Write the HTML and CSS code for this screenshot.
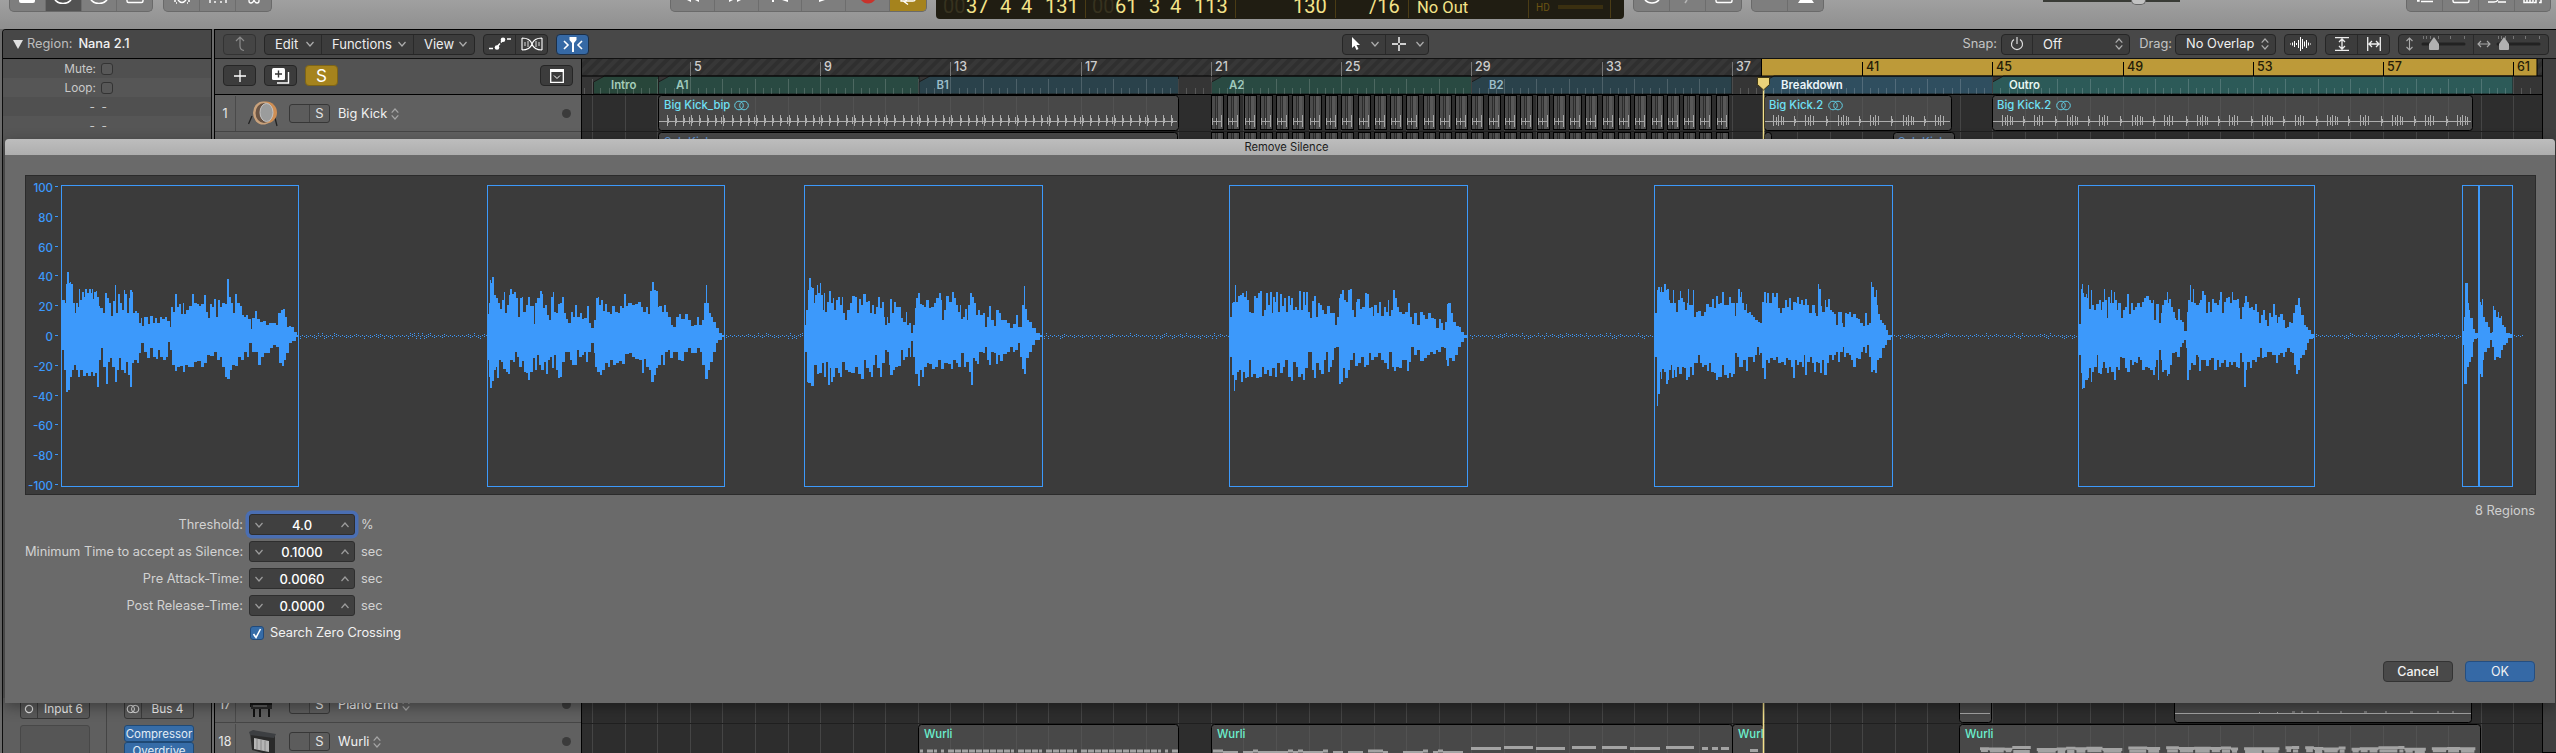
FILE: index.html
```html
<!DOCTYPE html>
<html lang="en">
<head>
<meta charset="utf-8">
<title>Remove Silence</title>
<link rel="stylesheet" href="styles.css">
</head>
<body>
<svg class="defs" aria-hidden="true">
  <symbol id="down" viewBox="0 0 10 10"><path d="M1.5 3l3.5 4 3.5-4" fill="none" stroke="currentColor" stroke-width="1.2"/></symbol>
  <symbol id="up" viewBox="0 0 10 10"><path d="M1.5 7l3.5-4 3.5 4" fill="none" stroke="currentColor" stroke-width="1.2"/></symbol>
  <symbol id="updown" viewBox="0 0 8 12"><path d="M.7 4.700L4 1l3.300 3.700M.7 7.300L4 11l3.300-3.700" fill="none" stroke="currentColor" stroke-width="1.2"/></symbol>
  <symbol id="stereo" viewBox="0 0 16 10"><g fill="none" stroke="currentColor" stroke-width="1.1"><circle cx="5.5" cy="5" r="4.2"/><circle cx="10.5" cy="5" r="4.2"/></g></symbol>
</svg>
<div class="app">
  <header class="topbar">
    <div class="tgroup g1">
      <span><svg width="16" height="4"><path d="M0 0h16v1q0 2-2 2H2q-2 0-2-2z" fill="#fff"/></svg></span>
      <span class="dark"><svg width="18" height="4"><path d="M1 0Q4 3.5 9 3.5T17 0" fill="none" stroke="#fff" stroke-width="1.6"/></svg></span>
      <span><svg width="18" height="4"><path d="M1 0Q4 3.5 9 3.5T17 0" fill="none" stroke="#fff" stroke-width="1.6"/></svg></span>
      <span><svg width="18" height="4"><path d="M1 0v1q0 1.5 1.5 1.5h13Q17 2.500 17 1V0" fill="none" stroke="#fff" stroke-width="1.4"/></svg></span>
    </div>
    <div class="tgroup g2">
      <span><svg width="18" height="4"><path d="M1 1h2M15 1h2M5 0q4 5 8 0M3 3h1M14 3h1" fill="none" stroke="#fff" stroke-width="1.4"/></svg></span>
      <span><svg width="18" height="4"><path d="M1 0v3M6 1v2M12 1v2M17 0v3" stroke="#fff" stroke-width="1.4"/></svg></span>
      <span><svg width="14" height="4"><path d="M2 0v1q0 2 2 2t3-3q1 3 3 3t2-2V0" fill="none" stroke="#fff" stroke-width="1.3"/></svg></span>
    </div>
    <div class="tgroup g3">
      <span><svg width="16" height="3"><path d="M3 0h4v2zM11 0h4v2z" fill="#fff"/></svg></span>
      <span><svg width="16" height="3"><path d="M1 0h4L1 2zM9 0h4L9 2z" fill="#fff"/></svg></span>
      <span><svg width="16" height="3"><path d="M0 0h2v2H0zM10 0h6v2z" fill="#fff"/></svg></span>
      <span><svg width="12" height="3"><path d="M1 0h6L1 2z" fill="#fff"/></svg></span>
      <span><svg width="14" height="4"><path d="M0 0h14q-3 3.500-7 3.500T0 0z" fill="#c8332c"/></svg></span>
      <span class="gold"><svg width="16" height="5"><path d="M1 0v1h12q2 0 2-1M7 0L4 1.500l4 3" fill="none" stroke="#fff" stroke-width="1.300"/></svg></span>
    </div>
    <div class="lcd">
      <div class="c1"><i>00</i><b class="n2">37</b><b class="n1">4</b><b class="n1b">4</b><b class="n3">131</b></div>
      <div class="c2"><i>00</i><b class="n2">61</b><b class="n1">3</b><b class="n1b">4</b><b class="n3">113</b></div>
      <div class="c3">130</div>
      <div class="c4">/16</div>
      <div class="c5">No Out</div>
      <div class="c6"><small>HD</small><em></em></div>
    </div>
    <div class="tgroup g4">
      <span><svg width="16" height="4"><path d="M1 0Q4 3 8 3T15 0" fill="none" stroke="#fff" stroke-width="1.600"/></svg></span>
      <span><svg width="10" height="4"><path d="M4 0L2 3" stroke="#b5b5b5" stroke-width="1.500"/></svg></span>
      <span><svg width="18" height="4"><path d="M1 0v1q0 1.500 1.500 1.500h13Q17 2.500 17 1V0" fill="none" stroke="#fff" stroke-width="1.400"/></svg></span>
    </div>
    <div class="tgroup g5"><span></span><span><svg width="16" height="4"><path d="M2 0h12l2 3H0z" fill="#fff"/></svg></span></div>
    <div class="master"><i></i></div>
    <div class="tgroup g6">
      <span><svg width="16" height="4"><path d="M0 0h2v1H0M4 1.500h12" stroke="#fff" stroke-width="1.400"/></svg></span>
      <span><svg width="18" height="4"><path d="M1 0v1q0 1.500 1.500 1.500h13Q17 2.500 17 1V0" fill="none" stroke="#fff" stroke-width="1.400"/></svg></span>
      <span><svg width="18" height="4"><path d="M0 2h6q3 0 4-2M10 2h8" fill="none" stroke="#fff" stroke-width="1.400"/></svg></span>
      <span><svg width="20" height="5"><path d="M1 0v2.500h9V0M4 0v2M7 0v2M13 0v2.500h-2M18 0v2.500h-2" fill="none" stroke="#fff" stroke-width="1.500"/></svg></span>
    </div>
  </header>

  <div class="main">
    <aside class="inspector">
      <div class="ihead"><svg width="10" height="9"><path d="M0 0h10L5 9z" fill="#e0e0e0"/></svg><span>Region:</span><b>Nana 2.1</b></div>
      <div class="irow"><span>Mute:</span><i></i></div>
      <div class="irow alt"><span>Loop:</span><i></i></div>
      <div class="irow dash"><span>-</span><span>-</span></div>
      <div class="irow alt dash"><span>-</span><span>-</span></div>
      <div class="fill"></div>
      <div class="strips">
        <div class="strip">
          <div class="io"><span><svg width="10" height="10"><circle cx="5" cy="5" r="3.600" fill="none" stroke="#ddd" stroke-width="1.200"/></svg></span><p>Input 6</p></div>
          <div class="slot"></div>
        </div>
        <div class="strip">
          <div class="io"><span><svg width="14" height="10"><use href="#stereo"/></svg></span><p>Bus 4</p></div>
          <div class="fx">Compressor</div><div class="fx">Overdrive</div>
        </div>
      </div>
    </aside>

    <section class="arrange">
      <div class="toolbar">
        <div class="btn up"><svg width="14" height="16"><path d="M3 5l4-4 4 4M7 1v9q0 4 4 4.500" fill="none" stroke="#8b8b8b" stroke-width="1.200"/></svg></div>
        <div class="seg menus"><span class="m1">Edit<svg width="10" height="10"><use href="#down"/></svg></span><span class="m2">Functions<svg width="10" height="10"><use href="#down"/></svg></span><span class="m3">View<svg width="10" height="10"><use href="#down"/></svg></span></div>
        <div class="seg pair">
          <span><svg width="22" height="14"><path d="M0 11.500h4M8 10l6-7M18 2h4" stroke="#fff" stroke-width="1.500" stroke-dasharray="4.500 1.500"/><circle cx="8" cy="10.500" r="2.300" fill="#fff"/><circle cx="14" cy="2.800" r="2.300" fill="#fff"/></svg></span>
          <span><svg width="22" height="14"><path d="M1 1v12M21 1v12M1 1q8 0 10 6t10 6M1 13q8 0 10-6T21 1" fill="none" stroke="#fff" stroke-width="1.100"/><path d="M4 5v4M7 4v6M15 4v6M18 5v4" stroke="#ddd"/></svg></span>
        </div>
        <div class="btn blue"><svg width="20" height="15"><path d="M1 4l4 4-4 4M19 4l-4 4 4 4" fill="none" stroke="#fff" stroke-width="1.600"/><path d="M6.500 0h7v3l-2.500 3v9H9V6L6.500 3z" fill="#fff"/></svg></div>
        <div class="seg tools">
          <span><svg width="9" height="14"><path d="M0 0v11l2.500-2.300L4.500 13l2-1-2-4H8z" fill="#fff"/></svg><svg width="10" height="10"><use href="#down"/></svg></span>
          <span><svg width="14" height="14"><path d="M7 0v6M7 8v6M0 7h6M8 7h6" stroke="#fff" stroke-width="1.400"/></svg><svg width="10" height="10"><use href="#down"/></svg></span>
        </div>
        <label class="snap">Snap:</label>
        <div class="seg snapbox"><span class="pw"><svg width="14" height="14"><path d="M4 2.500a5.500 5.500 0 1 0 6 0M7 0v7" fill="none" stroke="#ddd" stroke-width="1.200"/></svg></span><span class="val">Off<svg width="8" height="12"><use href="#updown"/></svg></span></div>
        <label class="drag">Drag:</label>
        <div class="seg dragbox"><span class="val">No Overlap<svg width="8" height="12"><use href="#updown"/></svg></span></div>
        <div class="btn wv"><svg width="22" height="14"><path d="M.5 6.500v1M2.500 5.500v3M4.500 4v6M6.500 6v2M8.500 3v8M10.500 0v14M12.500 2v10M14.500 4.500v5M16.500 3v8M18.500 5.500v3M20.500 6.500v1" stroke="#fff"/></svg></div>
        <div class="seg pair2">
          <span><svg width="14" height="14"><path d="M0 .7h14M0 13.300h14M7 2v10M4 5l3-3 3 3M4 9l3 3 3-3" fill="none" stroke="#eee" stroke-width="1.300"/></svg></span>
          <span><svg width="14" height="14"><path d="M.7 0v14M13.300 0v14M2 7h10M5 4L2 7l3 3M9 4l3 3-3 3" fill="none" stroke="#eee" stroke-width="1.300"/></svg></span>
        </div>
        <div class="seg zooms">
          <span><svg width="75" height="20"><path d="M10.500 4v12M7.500 7l3-3 3 3M7.500 13l3 3 3-3" fill="none" stroke="#aaa" stroke-width="1.100"/><path d="M24.500 2v3M27.500 2v3M31.500 2v3M39.500 2v3M51.500 2v3M65.500 2v3" stroke="#777"/><path d="M24 10h41" stroke="#222" stroke-width="3" stroke-linecap="round"/><path d="M35 3l5 7v5q0 1-1 1h-8q-1 0-1-1v-5z" fill="#b0b0b0"/></svg></span>
          <span><svg width="75" height="20"><path d="M4 10h12M7 7l-3 3 3 3M13 7l3 3-3 3" fill="none" stroke="#aaa" stroke-width="1.100"/><path d="M24.500 2v3M27.500 2v3M31.500 2v3M39.500 2v3M51.500 2v3M65.500 2v3" stroke="#777"/><path d="M24 10h41" stroke="#222" stroke-width="3" stroke-linecap="round"/><path d="M30 3l5 7v5q0 1-1 1h-8q-1 0-1-1v-5z" fill="#b0b0b0"/></svg></span>
        </div>
      </div>
      <div class="work">
        <div class="tracks">
          <div class="thead">
            <div class="btn"><svg width="12" height="12"><path d="M6 0v12M0 6h12" stroke="#fff" stroke-width="1.300"/></svg></div>
            <div class="btn"><svg width="18" height="16"><rect x="0" y="0" width="13" height="12" rx="1.500" fill="#fff"/><path d="M6.500 2.500v7M3 6h7" stroke="#333" stroke-width="1.400"/><path d="M16.500 4v11H5" fill="none" stroke="#fff" stroke-width="1.400"/></svg></div>
            <div class="btn solo">S</div>
            <div class="btn cfg"><svg width="14" height="14"><path d="M.7 2h12.600v11.300H.7z" fill="none" stroke="#fff" stroke-width="1.300"/><path d="M0 1.500h14" stroke="#fff" stroke-width="3"/><path d="M4 6.500l3 3 3-3" fill="none" stroke="#fff"/></svg></div>
          </div>
          <div class="trow">
            <span class="num">1</span>
            <svg class="ticon" width="30" height="28"><path d="M4 16L.5 24M26 14l3 12" stroke="#222" stroke-width="1.300"/><ellipse cx="18" cy="12.500" rx="11" ry="11" fill="#cf8f55"/><ellipse cx="15" cy="13" rx="10" ry="11.500" fill="#c9a27c"/><ellipse cx="16" cy="13" rx="8.500" ry="10" fill="#6b5545"/><ellipse cx="18.500" cy="12.500" rx="6.500" ry="9" fill="#9b9c9c" stroke="#c4c4c4"/></svg>
            <div class="ms"><i></i><b>S</b></div><span class="name">Big Kick</span><svg class="ud" width="8" height="12"><use href="#updown"/></svg><i class="dot"></i>
          </div>
          <div class="tgap"></div>
          <div class="trow r17">
            <span class="num">17</span>
            <svg class="ticon" width="30" height="28"><path d="M2 6l22-4v12L2 16z" fill="#141414"/><path d="M3 14h21v4H3z" fill="#2a2a2a"/><path d="M6 18v8M12 18v8M21 18v8" stroke="#111" stroke-width="2"/><path d="M5 15h14" stroke="#888"/></svg>
            <div class="ms"><i></i><b>S</b></div><span class="name">Piano End</span><svg class="ud" width="8" height="12"><use href="#updown"/></svg><i class="dot"></i>
          </div>
          <div class="trow r18">
            <span class="num">18</span>
            <svg class="ticon" width="30" height="28"><path d="M2 4l25 4v17l-5 2-18-5z" fill="#2a2a2a"/><path d="M6 10l15 3v11L6 21z" fill="#b5b5b5"/><path d="M9 11v10M13 12v10M17 13v10" stroke="#888"/><path d="M1 4l4-2 23 4-2 4L2 7z" fill="#3d3f42"/></svg>
            <div class="ms"><i></i><b>S</b></div><span class="name">Wurli</span><svg class="ud" width="8" height="12"><use href="#updown"/></svg><i class="dot"></i>
          </div>
        </div>
        <svg id="timeline" width="1960" height="694" viewBox="582 59 1960 694"></svg>
        <div class="scroll"></div>
      </div>
    </section>
  </div>
</div>

<div class="dialog">
  <div class="title">Remove Silence</div>
  <div class="body">
    <svg id="plot" width="2511" height="321" viewBox="25 175 2511 321"></svg>
    <div class="below">
      <form class="form">
        <label>Threshold:</label><div class="field focus"><svg width="10" height="10"><use href="#down"/></svg><b>4.0</b><svg width="10" height="10"><use href="#up"/></svg></div><span>%</span>
        <label>Minimum Time to accept as Silence:</label><div class="field"><svg width="10" height="10"><use href="#down"/></svg><b>0.1000</b><svg width="10" height="10"><use href="#up"/></svg></div><span>sec</span>
        <label>Pre Attack-Time:</label><div class="field"><svg width="10" height="10"><use href="#down"/></svg><b>0.0060</b><svg width="10" height="10"><use href="#up"/></svg></div><span>sec</span>
        <label>Post Release-Time:</label><div class="field"><svg width="10" height="10"><use href="#down"/></svg><b>0.0000</b><svg width="10" height="10"><use href="#up"/></svg></div><span>sec</span>
        <div class="check"><i><svg width="10" height="11"><path d="M1.500 6l2.500 3.500L8.500 1" fill="none" stroke="#fff" stroke-width="1.600"/></svg></i>Search Zero Crossing</div>
      </form>
      <div class="side">
        <p>8 Regions</p>
        <div class="actions"><button>Cancel</button><button class="ok">OK</button></div>
      </div>
    </div>
  </div>
</div>
<script src="app.js"></script>
</body>
</html>
```
FILE: styles.css
```css
* { box-sizing: border-box; }
body { margin: 0; width: 2556px; height: 753px; overflow: hidden; background: #8f8f8f; font: 13px/16px Inter, "Liberation Sans", sans-serif; color: #e4e4e4; }
svg { display: block; flex: none; }
p { margin: 0; }
b { font-weight: 500; }
i { font-style: normal; }
.defs { position: absolute; width: 0; height: 0; }
.app { display: flex; flex-direction: column; height: 753px; }

.topbar { flex: none; display: flex; height: 29px; background: linear-gradient(#a0a0a0, #8f8f8f); }
.tgroup { display: flex; height: 12px; background: #7e7e7e; border: 1px solid #6a6a6a; border-top: 0; border-radius: 0 0 5px 5px; overflow: hidden; }
.tgroup span { flex: 1; display: flex; justify-content: center; }
.tgroup span + span { border-left: 1px solid #6d6d6d; }
.tgroup .dark { background: #525252; }
.tgroup .gold { background: #a5831d; }
.g1 { width: 144px; margin-left: 9px; }
.g2 { width: 109px; margin-left: 10px; }
.g3 { width: 257px; margin-left: 398px; }
.g3 .gold { flex: 0 0 37px; }
.g4 { width: 109px; margin-left: 9px; }
.g5 { width: 73px; margin-left: 9px; }
.g6 { width: 145px; margin-left: 226px; }
.master { width: 137px; height: 2px; margin-left: 219px; background: #393b36; display: flex; }
.master i { width: 15px; height: 5px; margin-left: 88px; background: #c2c2c2; border: 1px solid #666; border-top: 0; border-radius: 0 0 8px 8px; }

.lcd { display: flex; width: 688px; height: 19px; margin-left: 9px; background: #201d12; border-radius: 0 0 4px 4px; font: 20px/13px Roboto, sans-serif; color: #f4e389; }
.lcd > div { display: flex; height: 18px; border-right: 1px solid #4b3c15; white-space: nowrap; }
.lcd i { color: #37321f; width: 23px; }
.lcd b { font-weight: 400; }
.c1 { width: 150px; padding-left: 7px; }
.c2 { width: 150px; padding-left: 6px; }
.n2 { width: 34px; } .n1, .n1b { width: 21px; } .n1b { width: 24px; }
.c3 { width: 100px; padding-left: 57px; }
.c4 { width: 73px; padding-left: 33px; }
.lcd .c5 { width: 120px; padding-left: 8px; font: 16.500px/16px Roboto, sans-serif; }
.c6 { width: 82px; padding: 3px 0 0 7px; gap: 10px; }
.c6 small { font: 10px/9px Roboto, sans-serif; color: #6b5312; width: 12px; }
.c6 em { width: 45px; height: 4px; margin-top: 2px; background: #3a2f10; }

.main { flex: 1; display: flex; padding-left: 2px; background: #6c6c6c; min-height: 0; }
.inspector { width: 210px; margin-right: 2px; border: 1px solid #0d0d0d; border-bottom: 0; border-radius: 4px 0 0 0; background: #525252; display: flex; flex-direction: column; overflow: hidden; }
.ihead { flex: none; height: 29px; display: flex; align-items: center; gap: 4px; padding-left: 10px; background: #474747; border-bottom: 1px solid #000; color: #bdbdbd; font-size: 12.800px; }
.ihead b { color: #f2f2f2; margin-left: 2px; }
.irow { flex: none; height: 19px; display: flex; align-items: center; padding-left: 61px; color: #c9c9c9; font-size: 11.800px; gap: 5px; background: #505050; }
.irow span { width: 32px; text-align: right; }
.irow i { width: 12px; height: 12px; border: 1px solid #333; border-radius: 3px; background: #585858; }
.irow.alt { background: #565656; }
.irow.dash { padding-left: 86px; gap: 6px; }
.irow.dash span { width: 6px; }
.fill { flex: 1; background: #565656; }
.strips { flex: none; height: 55px; display: flex; background: #5f5f5f; }
.strip { width: 104px; padding: 0 17px; border-right: 1px solid #444; display: flex; flex-direction: column; font-size: 12px; }
.strip + .strip { border: 0; }
.io { width: 70px; height: 21px; flex: none; display: flex; border: 1px solid #363636; border-radius: 0 0 3px 3px; background: #595959; align-items: center; margin-bottom: 6px; }
.io span { width: 17px; height: 100%; display: flex; align-items: center; justify-content: center; border-right: 1px solid #3c3c3c; }
.io p { flex: 1; text-align: center; color: #eee; font-size: 11.800px; }
.slot { width: 70px; height: 40px; flex: none; border: 1px solid #484848; border-radius: 3px; background: #565656; }
.fx { width: 70px; height: 17px; flex: none; background: #366ca7; border: 1px solid #1f4975; border-radius: 3px; text-align: center; color: #e2ecf5; font-size: 11.500px; line-height: 16px; }

.arrange { flex: 1; border: 1px solid #000; border-right: 0; display: flex; flex-direction: column; min-width: 0; background: #474747; }
.toolbar { flex: none; height: 29px; display: flex; align-items: center; padding-left: 8px; border-bottom: 1px solid #111; background: #484848; }
.btn, .seg { flex: none; height: 21px; border: 1px solid #262626; border-radius: 4px; background: #3c3c3c; display: flex; align-items: center; justify-content: center; }
.btn { width: 33px; }
.seg span { height: 100%; display: flex; align-items: center; justify-content: center; }
.seg span + span { border-left: 1px solid #2a2a2a; }
.up { background: #454545; border-color: #333; }
.menus { width: 211px; margin-left: 8px; color: #eee; }
.menus svg, .tools svg + svg, .val svg { color: #adadad; }
.seg.menus span { justify-content: space-between; padding: 0 6px 0 10px; }
.m1 { width: 56px; } .m2 { width: 92px; } .m3 { flex: 1; }
.pair { width: 65px; margin-left: 8px; } .pair span, .pair2 span, .zooms span, .tools span { flex: 1; }
.blue { margin-left: 8px; background: #3669a5; border-color: #1c2f47; }
.tools { width: 87px; margin-left: 753px; } .seg.tools span { gap: 9px; padding-left: 3px; }
.toolbar label { color: #c4c4c4; text-align: right; font-size: 12.800px; }
.snap { width: 40px; margin-left: 528px; }
.snapbox { width: 129px; margin-left: 4px; } .pw { width: 30px; } .snapbox .val { flex: 1; }
.seg .val { justify-content: space-between; padding: 0 6px 0 10px; color: #f0f0f0; width: 100%; }
.drag { width: 38px; margin-left: 4px; }
.dragbox { width: 101px; margin-left: 3px; font-size: 12.800px; white-space: nowrap; }
.wv { margin-left: 8px; }
.pair2 { width: 65px; margin-left: 8px; }
.zooms { width: 151px; margin-left: 8px; }
.seg.zooms span { overflow: hidden; justify-content: flex-start; }

.work { flex: 1; display: flex; min-height: 0; }
.tracks { width: 367px; flex: none; display: flex; flex-direction: column; border-right: 1px solid #000; background: #606060; }
.thead { flex: none; height: 36px; display: flex; gap: 8px; padding: 6px 8px 0; background: #535353; border-bottom: 1px solid #000; }
.thead .solo { background: #a5831d; border-color: #7d6417; color: #fff; font-size: 17px; }
.thead .cfg { margin-left: auto; }
.trow { flex: none; height: 37px; display: flex; align-items: center; border-bottom: 1px solid #454545; background: #606060; padding-top: 1px; }
.num { width: 21px; height: 100%; display: flex; align-items: center; justify-content: center; border-right: 1px solid #4a4a4a; color: #e8e8e8; font-size: 12.500px; }
.ticon { margin-left: 12px; }
.ms { width: 41px; height: 19px; margin-left: 11px; display: flex; border: 1px solid #373737; border-radius: 3px; background: #5c5c5c; }
.ms i { width: 20px; border-right: 1px solid #424242; }
.ms b { flex: 1; text-align: center; font-weight: 400; line-height: 17px; }
.name { margin-left: 8px; color: #f0f0f0; white-space: nowrap; font-size: 12.800px; }
.ud { margin-left: 4px; color: #a5a5a5; }
.dot { width: 9px; height: 9px; margin: 0 10px 0 auto; border-radius: 5px; background: #3b3b3b; }
.tgap { flex: 1; }
.r18 { margin-bottom: -8px; }
#timeline { flex: none; }
.scroll { flex: 1; border-left: 1px solid #000; background: #3f3f3f; }
#timeline text { font-family: Inter, "Liberation Sans", sans-serif; }

.dialog { position: absolute; left: 5px; top: 139px; width: 2550px; height: 564px; background: #6a6a6a; border-radius: 4px 4px 0 0; box-shadow: 0 4px 14px rgba(0,0,0,.35); overflow: hidden; display: flex; flex-direction: column; }
.title { flex: none; height: 16px; background: linear-gradient(#bdbdbd, #aeaeae); color: #1c1c1c; text-align: center; padding-left: 13px; font-size: 11.200px; line-height: 17px; }
.body { flex: 1; padding: 20px 20px 0; display: flex; flex-direction: column; }
#plot text { font: 500 11.500px Inter, "Liberation Sans", sans-serif; fill: #3c99fb; text-anchor: end; }
.below { flex: 1; display: flex; justify-content: space-between; }
.form { display: grid; grid-template-columns: 218px 106px auto; grid-auto-rows: 21px; gap: 6px; padding-top: 18px; align-items: center; align-content: start; color: #d2d2d2; font-size: 12.800px; }
.form label { text-align: right; white-space: nowrap; }
.field { height: 21px; display: flex; align-items: center; justify-content: space-between; padding: 0 4px; background: #404040; border: 1px solid #2e2e2e; border-radius: 3px; color: #9c9c9c; }
.field b { color: #fff; font-size: 13px; }
.focus { box-shadow: 0 0 0 3.500px #4a6eb2; }
.check { grid-column: 2 / 4; display: flex; align-items: center; gap: 6px; padding: 1px 0 0 1px; color: #f2f2f2; white-space: nowrap; }
.check i { width: 14px; height: 14px; display: flex; align-items: center; justify-content: center; background: #366ca7; border: 1px solid #214a7b; border-radius: 3px; }
.side { display: flex; flex-direction: column; align-items: flex-end; justify-content: space-between; color: #cfcfcf; padding: 7px 0 21px; font-size: 12.800px; }
.actions { display: flex; gap: 12px; }
.actions button { width: 70px; height: 21px; padding: 0; border: 1px solid #333; border-radius: 4px; background: #494949; color: #f2f2f2; font: 500 12.500px/17px Inter, sans-serif; }
.actions .ok { background: #3569a6; border-color: #254e80; font-weight: 400; }
```
FILE: app.js
```js
// Repeatable pseudo random numbers, so every load draws the same noise.
let seed = 7;
const rnd = () => (seed = (seed * 16807) % 2147483647) / 2147483647;

/* ---------- Timeline ---------- */
const barX = n => 690.4 + (n - 5) * 32.56;
let t = `<defs>
<pattern id="hatch" width="8" height="8" patternUnits="userSpaceOnUse" patternTransform="rotate(45)"><rect width="8" height="8" fill="#373737"/><rect width="4" height="8" fill="#2f2f2f"/></pattern>
</defs><rect x="582" y="59" width="1960" height="694" fill="#2d2d2d"/>
<rect x="582" y="59" width="1960" height="17" fill="url(#hatch)"/><rect x="582" y="76" width="1960" height="18" fill="#353535"/>`;

// gridlines of the track area
let grid = '';
for (let n = 2; n <= 61; n++) grid += `M${Math.floor(barX(n)) + .5} 96V753`;
t += `<path d="${grid}" stroke="#454545"/><path d="M582 131.500H2542M582 723.500H2542" stroke="#1f1f1f"/>`;
t += `<rect x="1762" y="59" width="775" height="17" fill="#bd9a39"/><path d="M1761.500 59v17M2537 59v17" stroke="#000"/>`;

const markers = [
  ['Intro', 593.500, 658.500, '#28463a', '#a5cdb9', 611], ['A1', 658.500, 919, '#294a42', '#9fc9bd', 676],
  ['B1', 919, 1178.500, '#2a424b', '#9cbdc9', 936.500], ['A2', 1211.500, 1471.500, '#294a42', '#9fc9bd', 1229],
  ['B2', 1471.500, 1732, '#2a424b', '#9cbdc9', 1489], ['Breakdown', 1763, 1992.500, '#2f4e5f', '#eaf4fa', 1781],
  ['Outro', 1992.500, 2513, '#2c5a58', '#e6f6f2', 2009]];
for (const [name, a, b, bg] of markers)
  t += `<path d="M${a} 94V82L${a + 11} 76H${b}V94z" fill="${bg}" stroke="#1c1c1c"/>`;
let ticks = '', tall = '';
for (let n = 1; n <= 62; n += .25) {
  const x = Math.floor(barX(n)) + .5;
  if (x < 583 || x > 2536) continue;
  if (Number.isInteger(n)) tall += `M${x} ${n % 4 === 1 ? 76 : 79}V94`; else ticks += `M${x} 88v6`;
}
t += `<path d="${ticks}${tall}" stroke="#fff" stroke-opacity=".17"/><path d="M582 76H2542M582 94.500H2542" stroke="#000"/>`;
for (const [name, , , , fg, tx] of markers)
  t += `<text x="${tx}" y="89.300" font-size="11.400" font-weight="600" fill="${fg}">${name}</text>`;
for (let n = 5; n <= 61; n += 4) {
  const x = Math.floor(barX(n)), on = x > 1762;
  t += `<path d="M${x + .5} 62V76" stroke="${on ? '#000' : '#777'}"/><text x="${x + 4}" y="71" font-size="12.500" font-weight="500" fill="${on ? '#241c08' : '#cdcdcd'}">${n}</text>`;
}

const region = (x, y, w, h) => `<rect x="${x + .5}" y="${y + .5}" width="${w}" height="${h}" rx="3" fill="#484848" stroke="#000"/>`;
const innerGrid = (a, b, y0, y1) => {
  let d = '';
  for (let n = 3; n <= 61; n++) { const x = Math.floor(barX(n)) + .5; if (x > a + 3 && x < b - 2) d += `M${x} ${y0}V${y1}`; }
  return `<path d="${d}" stroke="#525252"/>`;
};
const label = (x, y, s, fill) => `<text x="${x}" y="${y}" font-size="11.300" font-weight="500" fill="${fill}">${s}</text>`;
const rings = (x, y) => `<g fill="none" stroke="#62cfe4"><circle cx="${x + 5}" cy="${y}" r="4.300"/><circle cx="${x + 10}" cy="${y}" r="4.300"/></g>`;

// track 1
for (const [x, w] of [[658, 520], [1764, 187], [1992, 480]]) t += region(x, 95, w, 35) + innerGrid(x, x + w, 97, 130);
t += label(664, 109, 'Big Kick_bip', '#6fe0f5') + rings(734, 105.500) + label(1769, 109, 'Big Kick.2', '#6fe0f5') + rings(1828, 105.500) + label(1997, 109, 'Big Kick.2', '#6fe0f5') + rings(2056, 105.500);
let hits = 'M659 121.500H1177M1765 121.500H1950M1993 121.500H2471';
for (let x = 667, i = 0; x < 1175; x += 8.140, i++) { const X = Math.floor(x) + .5; hits += `M${X} 115v11M${X + 1} 118v5`; if (i % 4 === 3) hits += `M${X - 2} 117v7`; }
for (const [a, b] of [[1773, 1948], [2002, 2468]])
  for (let x = a, i = 0; x < b; x += 16.280, i++) {
    const X = Math.floor(x) + .5;
    hits += i % 2 ? `M${X + 5} 116v10M${X + 6} 119v4` : `M${X} 115v11M${X + 3} 117v8M${X + 5} 115v11M${X + 8} 116v9`;
    if (i % 4 === 0) hits += `M${X + 10} 117v8`;
  }
t += `<path d="${hits}" stroke="#adadad"/>`;

// chopped loop
let slices = '';
for (let i = 0; i < 32; i++) {
  const x = Math.floor(1211.500 + i * 16.280);
  for (const [y, h] of [[96, 34], [133, 7]])
    slices += `<rect x="${x + .5}" y="${y - .5}" width="12" height="${h}" fill="#4c4c4c" stroke="#000"/><rect x="${x + 7}" y="${y}" width="3" height="${h - 1}" fill="#585858"/><path d="M${x + 4.500} ${y}v${h - 1}M${x + 6.500} ${y}v${h - 1}" stroke="#2c2c2c"/>`;
  slices += `<path d="M${x + 1} 121.500h10M${x + 1.500} 118v7M${x + 5.500} 118v7M${x + 10.500} 115v12" stroke="#a5a5a5"/>`;
}
t += slices;

// track 2, just below the first
for (const [x, w] of [[658, 519], [1764, 7], [1893, 61]]) t += region(x, 132, w, 30);
t += label(664, 146, 'Sub Kick', '#5f93cf') + label(1898, 146, 'Sub Kick', '#5f93cf');

// tracks 17 and 18
for (const [x, w] of [[1959, 32], [2174, 297]]) t += region(x, 680, w, 42);
t += '<path d="M1960 713.500h30M2175 713.500h296M2259.500 712v1M2277.500 712v1M2292 712h3M2301 712h2M2317 712h2M2340 712h2M2364 712h3M2385 712h2M2410 712h3M2438 711v2M2452 712h2" stroke="#a3a3a3"/>';
for (const [x, w] of [[918, 260], [1211, 521], [1732, 31], [1959, 521]]) t += region(x, 724, w, 40) + innerGrid(x, x + w, 726, 753);
for (const x of [924, 1217, 1965]) t += label(x, 738, 'Wurli', '#6cf0cf');
t += label(1738, 738, 'Wurl', '#6cf0cf');
let notes = '';
for (let x = 920; x < 1173; x += 7) notes += `M${x} 751h${rnd() > .3 ? 6 : 3}`;
for (let x = 1213; x < 1468; x += 5) if (rnd() > .25) notes += `M${x} ${rnd() > .6 ? 751 : 752.500}h5`;
for (const [x, y, w] of [[1471, 748.500, 30], [1504, 747.500, 29], [1536, 748.500, 29], [1572, 747.500, 24], [1602, 747.500, 25], [1630, 748.500, 30], [1666, 747.500, 28], [1702, 748.500, 6], [1712, 748.500, 6], [1721, 748.500, 8], [1750, 750.500, 8]]) notes += `M${x} ${y}h${w}`;
for (let x = 1980; x < 2470;) { const w = 6 + rnd() * 14; notes += `M${x} ${747.500 + rnd() * 2}h${w}M${x + 1} ${750.500 + rnd()}h${w - 2}`; x += w + (rnd() > .8 ? 6 : 0); }
t += `<path d="${notes}" stroke="#a3a3a3" stroke-width="3"/>`;
t += '<path d="M1763.500 84V753" stroke="#f3e08b" stroke-width="1.500"/><path d="M1757.500 77.500h12v7l-6 5.500-6-5.500z" fill="#ead37a" stroke="#403712"/>';
document.getElementById('timeline').innerHTML = t;

/* ---------- Silence plot ---------- */
// Envelopes: "position,level" pairs; position in clip units, level in thirds of a pixel with 498 as the zero line.
const clips = [
{x:61,w:238,a:130,b:634,
top:'130,480 136,390 139,400 142,342 145,306 148,340 150,336 154,342 157,398 161,428 164,400 167,410 168,357 172,390 176,365 180,380 183,357 188,370 192,357 194,370 197,357 199,388 202,366 205,362 208,380 211,408 216,415 220,430 225,370 230,385 234,400 238,438 242,392 245,345 248,430 254,372 258,400 262,420 264,360 268,372 271,430 275,385 279,360 281,366 284,428 288,424 293,430 297,458 300,445 304,468 308,440 313,440 317,462 322,438 327,460 330,443 337,458 342,442 347,448 352,440 358,452 362,472 366,410 370,425 374,372 378,410 382,402 386,432 390,400 393,432 398,420 404,407 411,372 414,400 420,402 425,408 430,402 436,374 440,425 443,444 448,402 452,410 457,388 460,440 464,390 468,410 474,400 480,402 484,327 487,380 492,398 496,430 501,372 506,400 512,408 516,435 520,440 524,435 530,448 533,478 538,445 543,424 548,448 555,455 562,452 568,465 575,460 582,458 588,465 593,430 598,420 603,417 607,440 611,470 615,468 620,472 625,485 633,495',
bot:'130,520 134,540 138,600 143,666 147,660 151,620 155,600 160,585 164,600 168,622 173,600 180,618 185,610 190,618 195,605 200,618 205,610 209,650 213,570 217,535 222,590 227,642 231,575 236,565 241,590 246,635 251,600 256,565 260,600 266,610 270,575 275,615 279,650 283,580 288,570 292,580 297,550 303,520 308,545 316,563 322,535 328,560 333,568 338,540 343,560 349,570 355,560 359,515 364,540 368,585 373,602 379,590 384,588 391,605 396,585 402,590 409,590 415,575 422,572 430,592 436,580 443,555 450,558 457,545 463,570 469,560 475,590 480,620 485,627 490,600 496,585 502,588 508,560 514,570 520,545 526,560 532,520 537,545 543,545 550,584 556,560 563,550 570,550 576,535 582,525 590,530 595,580 600,587 605,570 610,548 615,520 622,512 633,502'},
{x:487,w:238,a:1033,b:1536,
top:'1033,498 1035,432 1038,400 1040,330 1043,340 1046,321 1049,375 1053,385 1058,400 1062,418 1066,390 1070,366 1073,430 1078,405 1081,375 1084,357 1088,372 1092,366 1096,385 1100,440 1104,385 1108,380 1112,425 1117,405 1122,381 1126,408 1130,408 1133,462 1137,400 1142,385 1147,363 1150,372 1153,415 1157,405 1161,435 1166,450 1170,380 1173,366 1176,425 1181,430 1185,402 1189,398 1193,380 1197,430 1202,448 1207,460 1212,425 1216,440 1221,405 1226,440 1231,428 1236,448 1242,445 1247,408 1251,460 1256,475 1261,450 1265,385 1269,380 1272,405 1276,390 1280,422 1285,402 1290,425 1295,432 1300,408 1306,425 1312,430 1317,408 1321,415 1325,372 1329,408 1335,398 1342,405 1348,402 1355,397 1361,412 1366,425 1370,410 1375,432 1380,362 1384,336 1388,360 1392,362 1395,410 1400,408 1404,425 1409,405 1413,425 1418,440 1424,465 1430,470 1436,440 1441,432 1447,448 1455,432 1461,450 1467,468 1473,465 1479,440 1484,465 1489,450 1493,400 1497,345 1501,400 1504,430 1508,440 1514,455 1520,475 1526,488 1535,496',
bot:'1033,510 1036,570 1039,620 1041,654 1045,632 1049,600 1054,590 1056,625 1060,570 1065,575 1070,598 1075,605 1080,612 1084,570 1090,575 1094,545 1098,560 1104,590 1109,572 1114,605 1118,610 1122,630 1127,605 1132,565 1136,600 1141,555 1145,585 1150,600 1155,575 1159,612 1163,570 1168,560 1172,595 1177,555 1182,600 1186,624 1190,620 1194,575 1200,545 1206,545 1211,570 1216,585 1221,585 1225,540 1230,562 1236,555 1241,545 1245,575 1250,545 1257,520 1260,550 1263,590 1268,605 1274,614 1280,600 1286,580 1291,592 1297,570 1303,585 1309,578 1316,572 1322,582 1329,552 1336,550 1343,560 1350,566 1358,570 1362,608 1367,568 1373,592 1378,600 1383,636 1387,615 1392,595 1398,585 1402,555 1407,585 1412,545 1418,540 1423,565 1428,545 1434,545 1441,570 1447,572 1453,545 1461,535 1466,550 1473,550 1480,535 1486,545 1490,585 1497,628 1502,600 1507,575 1513,545 1519,520 1525,510 1535,500'},
{x:804,w:239,a:136,b:642,
top:'136,490 139,465 142,420 145,360 149,324 152,350 155,355 158,398 161,375 164,345 167,370 171,339 174,375 177,420 180,370 183,425 187,395 192,363 196,400 199,385 202,420 205,390 211,382 214,405 218,380 221,430 224,450 229,420 236,400 241,378 246,382 249,430 254,388 259,405 264,372 269,395 274,392 277,430 282,405 287,432 291,410 295,380 299,415 303,395 306,440 309,466 313,440 316,460 321,387 325,430 328,396 334,410 339,410 344,445 349,455 353,427 357,465 361,460 365,490 368,465 372,415 376,385 380,370 384,402 388,405 393,412 397,390 403,415 408,410 414,400 419,385 423,369 427,390 431,450 435,420 440,378 446,395 452,366 456,385 460,405 464,425 467,405 471,448 475,440 479,418 482,450 486,405 490,369 494,380 498,398 502,435 507,420 512,435 517,430 522,472 526,440 530,408 535,450 541,468 546,420 551,430 557,450 563,450 570,460 575,475 581,462 587,436 591,470 595,470 599,405 603,348 606,418 610,450 616,455 623,475 630,488 642,496',
bot:'136,530 140,545 143,636 148,638 154,648 160,585 165,612 171,610 176,580 180,620 184,575 188,644 192,595 196,636 200,620 205,595 210,610 215,622 220,575 225,600 232,605 240,610 247,590 254,612 261,627 265,570 271,595 276,605 280,620 285,585 288,555 293,595 299,620 304,580 309,540 313,545 317,585 321,615 326,600 333,590 339,588 343,540 347,570 353,560 358,535 362,560 365,512 369,560 374,612 380,648 384,600 388,620 393,590 398,580 404,582 411,598 417,592 424,570 429,598 436,580 444,582 449,598 454,570 460,580 466,590 471,550 477,590 482,575 487,605 491,645 495,565 500,572 504,582 510,545 518,548 522,530 526,570 530,584 535,545 540,550 545,582 549,555 555,572 561,552 569,545 575,530 581,545 586,540 591,518 595,560 600,598 604,612 609,565 615,545 622,525 630,510 642,500'},
{x:1229,w:239,a:1036,b:1542,
top:'1036,490 1040,440 1044,400 1047,395 1050,345 1053,396 1057,378 1062,375 1067,370 1070,380 1073,363 1076,390 1080,425 1086,430 1090,378 1096,385 1100,370 1104,363 1108,437 1112,420 1116,370 1120,405 1124,366 1128,430 1131,380 1135,395 1138,366 1142,425 1146,372 1150,408 1154,385 1158,427 1163,378 1166,405 1169,384 1174,420 1178,410 1182,420 1186,363 1190,420 1195,366 1198,405 1201,366 1204,425 1210,445 1214,392 1218,378 1221,440 1226,400 1230,405 1234,420 1240,432 1246,408 1252,428 1258,430 1263,465 1267,440 1269,385 1273,372 1277,360 1281,390 1286,395 1290,360 1295,357 1299,420 1302,440 1306,395 1310,387 1315,418 1321,412 1325,370 1330,372 1334,415 1338,412 1342,437 1346,405 1351,430 1356,396 1361,437 1366,410 1370,425 1374,390 1377,437 1381,420 1385,360 1389,385 1393,410 1399,425 1405,432 1411,425 1417,398 1421,440 1426,462 1430,430 1436,465 1444,427 1449,435 1455,448 1461,430 1466,445 1472,448 1478,475 1483,448 1487,460 1491,480 1495,455 1498,402 1503,399 1507,430 1513,455 1519,468 1525,470 1531,485 1537,494 1542,496',
bot:'1036,530 1041,560 1045,615 1048,663 1051,630 1056,605 1060,600 1064,636 1068,605 1072,625 1076,620 1080,570 1085,620 1090,612 1096,624 1103,620 1108,590 1114,612 1119,600 1124,618 1130,595 1135,620 1140,580 1147,608 1152,590 1158,570 1163,620 1170,634 1174,575 1180,590 1185,620 1190,612 1195,630 1200,595 1205,545 1210,545 1213,600 1219,624 1223,580 1228,600 1234,612 1239,570 1243,545 1247,605 1251,590 1257,570 1261,535 1266,530 1270,642 1275,635 1280,595 1285,624 1290,600 1295,570 1301,548 1306,588 1312,580 1318,560 1324,590 1330,585 1335,548 1340,570 1347,560 1354,548 1360,570 1367,580 1373,598 1378,545 1383,590 1387,602 1393,590 1400,595 1405,570 1411,570 1415,603 1420,575 1424,530 1430,555 1436,540 1445,572 1452,565 1458,555 1464,545 1470,552 1477,540 1482,545 1488,530 1493,535 1496,570 1500,588 1505,565 1511,572 1517,555 1523,530 1530,515 1537,505 1542,500'},
{x:1654,w:239,a:664,b:1287,
top:'664,470 669,430 673,360 677,350 681,365 684,350 688,365 692,342 696,360 700,357 704,390 710,400 715,360 719,400 725,425 729,390 733,363 738,385 743,395 747,420 751,400 755,357 758,405 763,405 766,360 770,440 776,425 783,423 790,438 797,425 804,402 811,410 818,387 824,415 829,378 833,402 839,400 845,366 850,405 857,405 862,380 868,400 872,400 877,437 881,400 885,357 889,380 892,365 896,400 901,420 905,402 910,430 914,425 919,435 925,440 930,450 938,455 944,460 948,395 953,366 957,400 961,369 966,400 970,400 974,369 980,380 985,369 989,415 994,428 1001,415 1008,390 1013,410 1019,384 1024,420 1030,395 1036,400 1039,381 1043,402 1049,390 1055,405 1061,387 1066,405 1072,430 1080,405 1085,428 1089,437 1093,342 1097,357 1100,408 1106,425 1111,390 1116,410 1120,387 1125,420 1130,425 1135,432 1140,465 1145,427 1151,427 1155,460 1160,470 1165,430 1170,432 1175,425 1181,440 1187,432 1192,445 1198,447 1204,460 1211,468 1217,430 1222,465 1226,460 1231,336 1235,350 1240,380 1243,360 1246,405 1251,432 1256,450 1262,460 1267,465 1272,480 1278,494 1287,496',
bot:'664,525 669,560 673,708 677,672 680,605 684,627 688,598 693,605 697,642 702,630 706,600 710,585 714,625 718,600 722,622 726,590 733,612 739,590 745,595 749,630 755,622 760,590 766,614 771,578 776,580 781,555 785,580 792,590 798,585 804,602 810,580 817,605 823,608 829,630 834,620 840,620 845,585 850,615 857,625 862,610 867,620 872,612 877,548 882,560 887,590 893,590 900,570 907,602 912,560 919,560 926,575 931,555 935,530 938,555 944,550 949,595 954,627 958,570 963,580 970,565 978,570 985,560 992,580 1000,575 1005,585 1011,565 1018,570 1023,590 1028,624 1033,570 1039,585 1046,575 1053,590 1056,555 1061,614 1067,575 1073,562 1079,580 1084,605 1090,575 1094,580 1100,608 1105,570 1111,614 1118,580 1124,555 1130,570 1136,555 1141,545 1147,575 1153,545 1158,530 1162,560 1168,550 1175,555 1181,570 1187,592 1192,565 1199,568 1206,545 1211,530 1215,550 1221,525 1226,560 1232,605 1238,600 1243,610 1248,570 1255,565 1262,535 1269,525 1275,510 1287,500'},
{x:2078,w:237,a:267,b:911,
top:'267,462 273,462 276,357 279,342 282,368 286,380 290,372 293,385 296,345 300,418 304,360 308,405 313,420 320,402 326,390 331,420 335,395 339,357 343,390 347,443 351,380 355,400 358,360 362,400 366,366 370,390 374,420 380,400 385,445 391,420 397,410 404,372 409,432 414,400 420,420 426,410 431,400 438,410 443,395 448,385 456,378 463,390 468,400 472,390 477,450 481,402 486,402 490,458 494,430 498,405 505,390 510,366 513,400 517,387 521,410 527,425 532,445 536,450 540,418 546,450 552,455 556,482 561,482 565,425 569,390 573,345 577,395 581,357 586,400 592,405 598,400 601,390 606,363 612,375 616,428 622,396 629,425 633,387 640,400 647,405 652,390 656,366 661,428 667,395 673,385 678,381 682,400 687,366 692,390 697,390 702,387 706,415 710,447 714,410 720,400 723,378 728,395 735,415 741,412 746,420 751,402 757,425 762,460 767,435 772,420 778,450 784,468 789,430 794,440 799,402 804,435 809,458 814,440 820,432 826,450 831,475 837,470 843,455 850,460 855,430 860,405 867,384 871,410 877,435 883,465 890,470 896,480 903,492 911,497',
bot:'267,545 274,555 277,610 279,657 284,655 287,630 291,630 296,625 299,595 303,636 307,605 312,590 317,590 320,555 323,608 330,612 334,595 338,575 343,595 350,608 355,590 360,605 368,630 372,590 378,600 384,562 390,565 397,595 405,606 409,570 416,585 422,575 428,580 432,560 437,570 445,600 452,590 460,595 467,600 473,614 478,590 482,570 486,630 490,540 494,570 499,605 505,600 510,618 515,612 520,585 526,550 533,545 540,562 547,530 552,520 557,510 562,535 567,630 572,600 578,580 583,585 590,555 594,560 600,602 605,570 612,570 620,588 626,570 633,565 640,600 647,570 653,590 660,580 666,570 673,590 680,575 686,585 693,575 700,590 705,595 709,550 715,575 720,650 725,600 730,575 738,595 744,570 751,575 758,560 764,535 770,565 777,560 784,545 790,545 796,555 803,555 808,580 814,555 820,550 826,560 832,545 840,535 846,545 853,550 857,585 863,612 869,600 874,565 880,555 886,540 892,520 900,507 911,505'},
{x:2462,w:51,a:1312,b:1451,
top:'1312,485 1317,482 1319,440 1320,339 1326,340 1328,400 1332,420 1338,445 1344,478 1350,488 1355,488 1357,400 1359,360 1361,395 1365,405 1368,387 1372,440 1379,455 1386,470 1392,488 1395,485 1398,408 1403,420 1408,442 1411,425 1415,445 1419,438 1424,465 1430,470 1436,488 1450,493',
bot:'1312,520 1317,525 1320,642 1325,642 1328,590 1334,575 1340,560 1343,515 1349,508 1355,505 1357,580 1361,612 1366,622 1370,570 1376,545 1384,535 1392,510 1396,530 1400,570 1407,560 1416,565 1421,540 1427,525 1435,518 1438,504 1450,503'}
];
const parse = s => s.split(' ').map(p => p.split(',').map(Number));
// Level of the sample nearest to x, which keeps the peaks and notches square.
const at = (pts, x) => {
  for (let i = 1; i < pts.length; i++)
    if (x <= pts[i][0]) return x - pts[i - 1][0] < pts[i][0] - x ? pts[i - 1][1] : pts[i][1];
  return pts[pts.length - 1][1];
};
let p = '<rect x="25.500" y="175.500" width="2510" height="319" fill="#3b3b3b" stroke="#2b2b2b"/>';
let wave = '', dots = '';
for (const c of clips) {
  const top = parse(c.top), bot = parse(c.bot);
  for (let i = 0; i < c.w; i++) {
    const u = c.a + (i + .5) * (c.b - c.a) / c.w;
    const y0 = Math.round(170 + at(top, u) / 3), y1 = Math.round(170 + at(bot, u) / 3);
    wave += `M${c.x + i} ${y0}h1V${y1}h-1z`;
  }
}
const inClip = x => clips.some(c => x >= c.x && x < c.x + c.w + 1);
for (let x = 300; x < 2523; x += 2) {
  if (inClip(x)) continue;
  const y = 335 + (x % 4 ? 0 : 1);
  dots += `M${x} ${y}h1v1h-1z`;
  if (rnd() > .62) dots += `M${x} ${y + (rnd() > .5 ? 2 : -2)}h1v1h-1z`;
}
p += `<path d="${wave}${dots}" fill="#3c99fb" shape-rendering="crispEdges"/>`;
for (const [x, w] of [[61, 238], [487, 238], [804, 239], [1229, 239], [1654, 239], [2078, 237], [2462, 17], [2479, 34]])
  p += `<rect x="${x + .5}" y="185.500" width="${w - 1}" height="301" fill="none" stroke="#3c99fb"/>`;
for (let v = 100; v >= -100; v -= 20) {
  const y = Math.round(336 - v * 1.490);
  p += `<text x="53" y="${y + 4.500}">${v}</text><path d="M55 ${y - .5}h3" stroke="#3c99fb"/>`;
}
document.getElementById('plot').innerHTML = p;
```
